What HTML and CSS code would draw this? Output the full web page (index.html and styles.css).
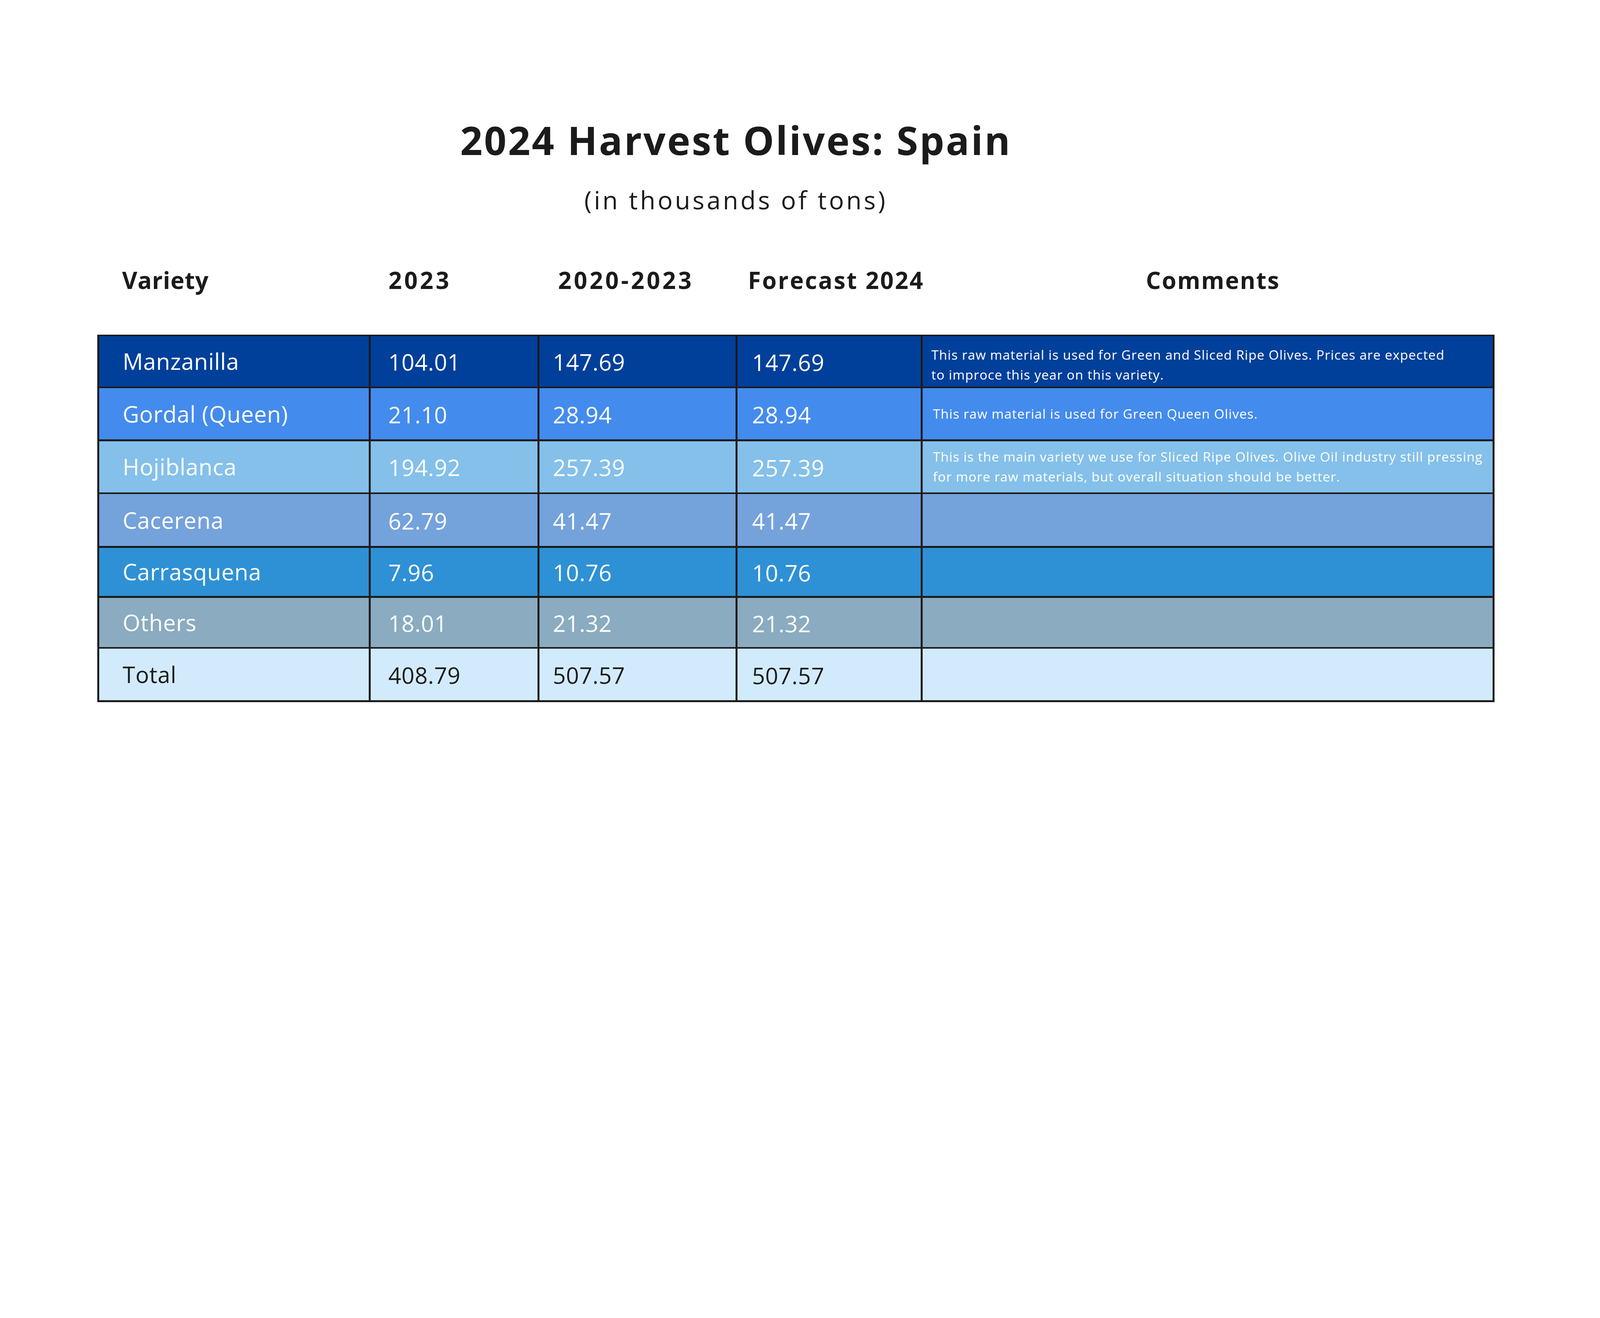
FILE: index.html
```html
<!DOCTYPE html>
<html lang="en">
<head>
<meta charset="utf-8">
<title>2024 Harvest Olives: Spain</title>
<link rel="stylesheet" href="styles.css">
</head>
<body>
<main class="page">
  <header class="titles">
    <h1 class="title">2024 Harvest Olives: Spain</h1>
    <p class="subtitle">(in thousands of tons)</p>
  </header>

  <div class="head-row">
    <div class="hcell h-variety">Variety</div>
    <div class="hcell h-2023">2023</div>
    <div class="hcell h-avg">2020-2023</div>
    <div class="hcell h-forecast">Forecast 2024</div>
    <div class="hcell h-comments">Comments</div>
  </div>

  <div class="table">
    <div class="row r-manz">
      <div class="cell c-name">Manzanilla</div>
      <div class="cell c-y1">104.01</div>
      <div class="cell c-y2">147.69</div>
      <div class="cell c-y3">147.69</div>
      <div class="cell c-comment">This raw material is used for Green and Sliced Ripe Olives. Prices are expected<br>to improce this year on this variety.</div>
    </div>
    <div class="row r-gordal">
      <div class="cell c-name">Gordal (Queen)</div>
      <div class="cell c-y1">21.10</div>
      <div class="cell c-y2">28.94</div>
      <div class="cell c-y3">28.94</div>
      <div class="cell c-comment">This raw material is used for Green Queen Olives.</div>
    </div>
    <div class="row r-hoji">
      <div class="cell c-name">Hojiblanca</div>
      <div class="cell c-y1">194.92</div>
      <div class="cell c-y2">257.39</div>
      <div class="cell c-y3">257.39</div>
      <div class="cell c-comment">This is the main variety we use for Sliced Ripe Olives. Olive Oil industry still pressing<br>for more raw materials, but overall situation should be better.</div>
    </div>
    <div class="row r-cace">
      <div class="cell c-name">Cacerena</div>
      <div class="cell c-y1">62.79</div>
      <div class="cell c-y2">41.47</div>
      <div class="cell c-y3">41.47</div>
      <div class="cell c-comment"></div>
    </div>
    <div class="row r-carr">
      <div class="cell c-name">Carrasquena</div>
      <div class="cell c-y1">7.96</div>
      <div class="cell c-y2">10.76</div>
      <div class="cell c-y3">10.76</div>
      <div class="cell c-comment"></div>
    </div>
    <div class="row r-others">
      <div class="cell c-name">Others</div>
      <div class="cell c-y1">18.01</div>
      <div class="cell c-y2">21.32</div>
      <div class="cell c-y3">21.32</div>
      <div class="cell c-comment"></div>
    </div>
    <div class="row r-total">
      <div class="cell c-name">Total</div>
      <div class="cell c-y1">408.79</div>
      <div class="cell c-y2">507.57</div>
      <div class="cell c-y3">507.57</div>
      <div class="cell c-comment"></div>
    </div>
  </div>
</main>
</body>
</html>
```

FILE: styles.css
```css
html, body {
  margin: 0;
  padding: 0;
  background: #ffffff;
}

body {
  font-family: "Open Sans", "Noto Sans", sans-serif;
  color: #1b1b1b;
}

.page {
  padding-top: 308px;
}

.titles {
  width: 3768px;
  text-align: center;
}

.title {
  margin: 0;
  font-size: 100px;
  line-height: 1;
  font-weight: 700;
  letter-spacing: 4px;
  color: #1b1b1b;
}

.subtitle {
  margin: 72px 0 0;
  font-size: 64px;
  line-height: 1;
  font-weight: 400;
  letter-spacing: 5.8px;
  color: #1b1b1b;
}

/* shared column template: content widths between the 4.8px rules */
.head-row,
.table {
  display: grid;
  grid-template-columns: 690.2px 427.4px 501.8px 469.7px 1458.9px;
  column-gap: 4.8px;
  margin-left: 249.2px;
  width: 3576.8px;
  box-sizing: border-box;
  padding: 0 4.8px;
}

.head-row {
  margin-top: 143px;
  font-size: 60px;
  line-height: 1;
  font-weight: 700;
  letter-spacing: 2.4px;
  color: #1b1b1b;
}

.hcell {
  white-space: nowrap;
}

.h-variety { padding-left: 58.5px; letter-spacing: 0.8px; }
.h-2023 { padding-left: 45.5px; letter-spacing: 6px; }
.h-avg { padding-left: 47.5px; letter-spacing: 6px; }
.h-forecast { padding-left: 27px; letter-spacing: 3.3px; }
.h-comments { text-align: center; padding-left: 27px; }

.table {
  margin-top: 109.5px;
  padding: 4.8px;
  row-gap: 4.8px;
  background: #1b1b1b;
  grid-template-rows: 128.3px 130.4px 131.1px 132.4px 123.6px 125.6px 131.8px;
}

.row {
  display: contents;
}

.cell {
  display: flex;
  align-items: center;
  font-size: 58px;
  line-height: 1;
  letter-spacing: 0.7px;
  color: #ffffff;
  white-space: nowrap;
}

.c-name { padding-left: 60px; }
.c-y1 { padding-left: 45px; padding-top: 4px; }
.c-y2 { padding-left: 34px; padding-top: 4px; }
.c-y3 { padding-left: 37.5px; padding-top: 5.5px; }

.c-comment {
  padding-left: 22px;
  font-size: 33.5px;
  line-height: 51.2px;
  letter-spacing: 1.25px;
}

.r-manz > .cell { background: #00409a; }
.r-gordal > .cell { background: #448bee; }
.r-hoji > .cell { background: #84c0ea; }
.r-cace > .cell { background: #74a2db; }
.r-carr > .cell { background: #2e91d5; }
.r-others > .cell { background: #8aabc0; }
.r-total > .cell { background: #d2ebfc; color: #1b1b1b; }

.r-manz > .c-comment { padding-top: 18px; }
.r-gordal > .c-comment,
.r-hoji > .c-comment { padding-left: 26px; }
```
